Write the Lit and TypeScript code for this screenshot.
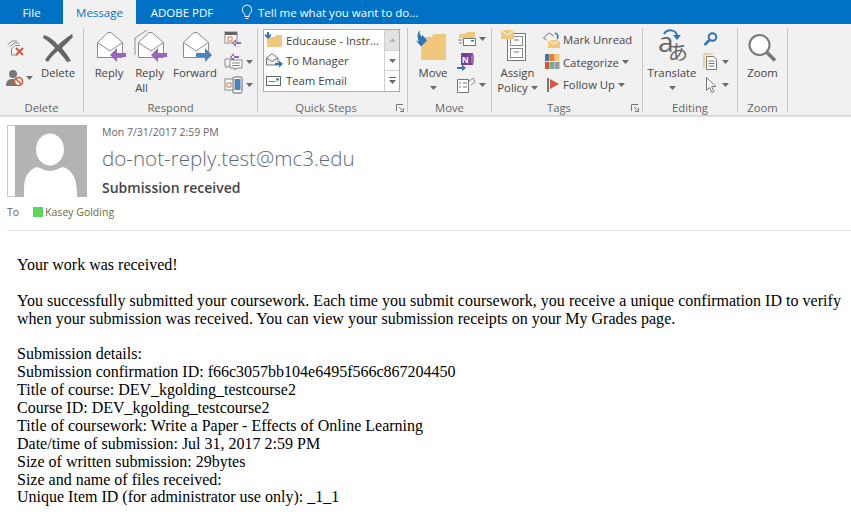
import { LitElement, html, css, svg } from "lit";
import { customElement } from "lit/decorators.js";

const caret = html`<svg class="caret" width="7" height="4" viewBox="0 0 7 4"><path d="M0 0h7L3.5 4z" fill="#6a6a6a"/></svg>`;

const env = (arrow: string, dir: "l" | "r", extra = "") => html`<svg width="34" height="34" viewBox="0 0 34 34">
  ${extra ? svg`<path d="${extra}" fill="none" stroke="#8f8f8f" stroke-width="1"/>` : ""}
  <path d="M5.500 14.500L16 4.500h3L30.500 14.500V29.500H5.500z" fill="#fff" stroke="#8a8a8a"/>
  <path d="M5.500 14.500L18 23L30.500 14.500" fill="none" stroke="#8a8a8a"/>
  ${dir === "l"
    ? svg`<path d="M34 25H25v-5l-7 7 7 7v-5h9z" fill="${arrow}"/>`
    : svg`<path d="M18 25h9v-5l7 7-7 7v-5h-9z" fill="${arrow}"/>`}
</svg>`;

const launcher = html`<svg class="launch" width="8" height="8" viewBox="0 0 8 8"><path d="M.5 7V.5H7M3 3l3.500 3.500M7.500 4v3.500H4" fill="none" stroke="#777"/></svg>`;

@customElement("app-root")
export class AppRoot extends LitElement {
  static styles = css`
    :host { display: block; width: 851px; height: 520px; overflow: hidden; background: #fff; font-family: "Open Sans", "Noto Sans", sans-serif; color: #444; }
    .tabs { display: flex; height: 24px; background: #0072c6; color: #fff; font-size: 11.5px; align-items: center; }
    .tab { height: 24px; display: flex; align-items: center; justify-content: center; }
    .file { width: 63px; }
    .active { width: 73px; background: #f1f1f1; color: #0072c6; }
    .pdf { width: 92px; }
    .tell { display: flex; align-items: center; gap: 5px; margin-left: 13px; }
    .ribbon { display: flex; height: 92px; box-sizing: border-box; background: #f1f1f1; border-bottom: 1px solid #d6d6d6; padding-top: 4px; font-size: 11.3px; color: #444; }
    .group { display: flex; flex-direction: column; height: 84px; border-right: 1px solid #c6c6c6; position: relative; }
    .content { display: flex; height: 72px; }
    .label { height: 12px; line-height: 16px; text-align: center; color: #666; font-size: 11.3px; }
    .launch { position: absolute; right: 3px; bottom: 0; }
    .big { display: flex; flex-direction: column; align-items: center; line-height: 15px; }
    .ic { height: 34px; display: flex; align-items: flex-end; justify-content: center; margin-bottom: 3px; }
    .ic svg { overflow: visible; }
    .under { height: 15px; display: flex; align-items: center; }
    .col { display: flex; flex-direction: column; }
    .del { width: 38px; padding: 6px 0 0 6px; box-sizing: border-box; gap: 6px; }
    .del .sm { height: 25px; gap: 2px; }
    .sm { height: 22.700px; display: flex; align-items: center; gap: 3px; white-space: nowrap; }
    .caret { flex: none; }
    .qs { display: flex; width: 137px; height: 63px; margin-left: 5px; margin-top: 1px; box-sizing: border-box; border: 1px solid #ababab; background: #fff; }
    .qlist { flex: 1; }
    .qrow { height: 20.300px; display: flex; align-items: center; gap: 3px; padding-left: 1px; white-space: nowrap; }
    .qbar { width: 14px; border-left: 1px solid #d0d0d0; display: flex; flex-direction: column; }
    .qbar div { flex: 1; display: flex; align-items: center; justify-content: center; }
    .qbar .up { background: #e2e2e2; }
    .qbar .mid { border-top: 1px solid #d0d0d0; border-bottom: 1px solid #d0d0d0; }
    .head { height: 115px; box-sizing: border-box; border-top: 1px solid #e0e0e0; padding: 8px 0 0 7px; display: flex; flex-direction: column; }
    .meta { display: flex; }
    .avatar { width: 80px; height: 72px; box-sizing: border-box; border: 1px solid #c8c8c8; border-right: none; display: flex; }
    .avatar i { width: 7px; background: #fff; }
    .avatar svg { margin-top: -1px; margin-bottom: -1px; }
    .texts { margin-left: 15px; display: flex; flex-direction: column; }
    .date { font-size: 10.5px; line-height: 14px; color: #666; }
    .from { font-size: 20.600px; font-weight: 300; line-height: 27px; margin-top: 6px; color: #5f6b75; }
    .subj { font-size: 14px; font-weight: 600; line-height: 18px; margin-top: 7px; color: #444; }
    .to { display: flex; align-items: center; font-size: 10.500px; height: 14px; margin-top: 8px; color: #666; }
    .to b { width: 10px; height: 10px; background: #5ed45a; margin-left: 14px; margin-right: 2px; }
    .to span { color: #6a6a3a; }
    .sep { height: 1px; flex: none; background: #e1e1e1; margin-top: 11px; }
    .body { padding: 25px 0 0 17px; font-family: "Liberation Serif", serif; font-size: 16px; line-height: 17.880px; color: #000; }
    .body p { margin: 0 0 17.880px; }
    .body .wide { letter-spacing: 0.025px; }
  `;

  render() {
    return html`
      <div class="tabs">
        <div class="tab file">File</div>
        <div class="tab active">Message</div>
        <div class="tab pdf">ADOBE PDF</div>
        <div class="tell">
          <svg width="12" height="17" viewBox="0 0 12 17"><path d="M6 1a4.800 4.800 0 0 0-3 8.500c.8.700 1 1.500 1 3h4c0-1.500.2-2.300 1-3A4.800 4.800 0 0 0 6 1zM4.500 14.500h3" fill="none" stroke="#fff"/></svg>
          <span>Tell me what you want to do...</span>
        </div>
      </div>
      <div class="ribbon">
        <div class="group" style="width:83px">
          <div class="content">
            <div class="col del">
              <div class="sm"><svg width="18" height="18" viewBox="0 0 18 18"><path d="M1.500 7L6 3h5M3.500 9L8 5h5M5.500 11L9 7.500h5" fill="none" stroke="#888"/><path d="M5.500 11v6h6" fill="none" stroke="#888"/><path d="M10 10l7 7M17 10l-7 7" stroke="#d9583b" stroke-width="2"/></svg></div>
              <div class="sm"><svg width="18" height="18" viewBox="0 0 18 18"><circle cx="7" cy="5" r="4" fill="#777"/><path d="M0 17c0-6 3-7 7-7s5 2 5 7z" fill="#777"/><circle cx="12.500" cy="12.500" r="4" fill="#fff" stroke="#d9583b" stroke-width="1.600"/><path d="M9.500 9.500l6 6" stroke="#d9583b" stroke-width="1.600"/></svg>${caret}</div>
            </div>
            <div class="big" style="width:40px">
              <div class="ic"><svg width="30" height="28" viewBox="0 0 30 28"><path d="M1 1C7 3 12 7 15 11C19 7 24 3 29 0L30 3C26 7 22 11 19 14C22 18 26 23 28 27L24 28C21 24 18 20 15 17C11 20 7 24 5 28L2 26C5 21 9 17 12 14C8 10 4 6 0 4z" fill="#666"/></svg></div>
              <span>Delete</span>
            </div>
          </div>
          <div class="label">Delete</div>
        </div>
        <div class="group" style="width:173px">
          <div class="content" style="padding-left:7px">
            <div class="big" style="width:36px"><div class="ic">${env("#9a64b8", "l")}</div><span>Reply</span></div>
            <div class="big" style="width:45px"><div class="ic">${env("#9a64b8", "l", "M2 27V10L14 2")}</div><span>Reply<br>All</span></div>
            <div class="big" style="width:46px"><div class="ic">${env("#4a82bd", "r")}</div><span>Forward</span></div>
            <div class="col" style="padding:0 0 0 6px">
              <div class="sm"><svg width="18" height="16" viewBox="0 0 18 16"><rect x="1" y="1" width="12" height="11" fill="#fff" stroke="#888"/><path d="M1 1h12v3H1z" fill="#666"/><rect x="4" y="6" width="4" height="4" fill="none" stroke="#e0782e"/><path d="M10 11h7v2h-7zM12 8l-4 4 4 4z" fill="#9a64b8"/></svg></div>
              <div class="sm"><svg width="19" height="18" viewBox="0 0 19 18"><path d="M1 6h7v7H4l-2 2v-2H1z" fill="#fff" stroke="#888"/><path d="M6 7h12v8h-5l-2 2v-2H6z" fill="#fff" stroke="#888"/><path d="M8 10h8M8 12.500h8" stroke="#888"/><path d="M8 3h7v2H8zM10 0L6 4l4 4z" fill="#9a64b8"/></svg>${caret}</div>
              <div class="sm"><svg width="19" height="18" viewBox="0 0 19 18"><rect x="1" y="3" width="11" height="11" fill="#fff" stroke="#888"/><rect x="3" y="7" width="4" height="4" fill="none" stroke="#e0782e"/><rect x="9" y="1" width="9" height="16" rx="1" fill="#fff" stroke="#666"/><rect x="10.500" y="3" width="6" height="11" fill="#4a82bd"/></svg>${caret}</div>
            </div>
          </div>
          <div class="label">Respond</div>
        </div>
        <div class="group" style="width:149px">
          <div class="content">
            <div class="qs">
              <div class="qlist">
                <div class="qrow"><svg width="18" height="16" viewBox="0 0 18 16"><path d="M2 5h7l2-2h6v12H2z" fill="#f0c87c"/><path d="M2 0h2v3l2-1v2l-3 3-3-3V2l2 1z" fill="#2f74b5"/></svg><span>Educause - Instr...</span></div>
                <div class="qrow"><svg width="18" height="16" viewBox="0 0 18 16"><path d="M1.500 6L7 1.500 13 6v7H1.500z" fill="#f1f1f1" stroke="#777"/><path d="M1.500 6L7 9.500 13 6" fill="none" stroke="#777"/><path d="M10 11h5v2h-5zM14 8.500l4 3.500-4 3.500z" fill="#2f74b5"/></svg><span>To Manager</span></div>
                <div class="qrow"><svg width="18" height="16" viewBox="0 0 18 16"><rect x="1.500" y="3.500" width="14" height="9" fill="#fff" stroke="#666"/><path d="M3.500 8.500h7" stroke="#777"/><rect x="11" y="5.500" width="3" height="2" fill="#2f74b5"/></svg><span>Team Email</span></div>
              </div>
              <div class="qbar">
                <div class="up"><svg width="7" height="4" viewBox="0 0 7 4"><path d="M0 4h7L3.500 0z" fill="#b5b5b5"/></svg></div>
                <div class="mid">${caret}</div>
                <div><svg width="7" height="8" viewBox="0 0 7 8"><path d="M0 .5h7" stroke="#6a6a6a"/><path d="M0 3h7L3.500 7z" fill="#6a6a6a"/></svg></div>
              </div>
            </div>
          </div>
          <div class="label" style="padding-right:13px">Quick Steps</div>
          ${launcher}
        </div>
        <div class="group" style="width:83px">
          <div class="content" style="padding-left:7px">
            <div class="big" style="width:36px"><div class="ic"><svg width="32" height="32" viewBox="0 0 32 32"><path d="M4 7h10l3-3h12v26H4z" fill="#f0c87c"/><path d="M3 0c-1 3 0 5 2 7V4.500l5 6-6 6-5-6 3 1C0 8 0 3 3 0z" fill="#2f74b5"/></svg></div><span>Move</span><div class="under">${caret}</div></div>
            <div class="col" style="padding:0 0 0 6px">
              <div class="sm"><svg width="19" height="17" viewBox="0 0 19 17"><path d="M2 3h6l2-2h8v6H2z" fill="#f0c87c"/><rect x="6.500" y="7.500" width="12" height="7" fill="#fff" stroke="#777"/><path d="M1 9h4M2 12h3" stroke="#777"/><rect x="14" y="9" width="3" height="1.500" fill="#2f74b5"/></svg>${caret}</div>
              <div class="sm"><svg width="19" height="18" viewBox="0 0 19 18"><rect x="4" y="0" width="12" height="12" fill="#7c3f96"/><path d="M14 2h3v8h-3z" fill="#a56cc0"/><text x="5" y="10" font-size="9" font-weight="700" fill="#fff" font-family="Liberation Sans">N</text><path d="M0 14h5v2H0zM5 11.500L9 15l-4 3z" fill="#2f74b5"/></svg></div>
              <div class="sm"><svg width="19" height="18" viewBox="0 0 19 18"><path d="M.5 3.500h11v13H.5z" fill="#fff" stroke="#777"/><path d="M2 7h2M6 7h4M2 11h2M6 11h4" stroke="#777"/><path d="M12 5l4-3 2 4-4 3" fill="none" stroke="#888"/></svg>${caret}</div>
            </div>
          </div>
          <div class="label">Move</div>
        </div>
        <div class="group" style="width:150px">
          <div class="content">
            <div class="big" style="width:51px"><div class="ic"><svg width="28" height="32" viewBox="0 0 28 32" style="margin-left:-6px"><rect x="6.500" y="3.500" width="18" height="27" fill="#fff" stroke="#777"/><rect x="9.500" y="6.500" width="12" height="9" fill="none" stroke="#888"/><rect x="9.500" y="18.500" width="12" height="9" fill="none" stroke="#888"/><path d="M13 10h5M13 22h5" stroke="#777"/><path d="M0 0h13v9H0z" fill="#f0c87c"/><path d="M0 0l6.500 5L13 0" fill="none" stroke="#fff"/></svg></div><span>Assign</span><span style="display:flex;align-items:center;gap:3px">Policy ${caret}</span></div>
            <div class="col">
              <div class="sm"><svg width="17" height="17" viewBox="0 0 17 17"><path d="M5 9h12v8H5z" fill="#f0c87c"/><path d="M5 9l6 4 6-4" fill="none" stroke="#fff"/><path d="M.5 7L6 2l5 3" fill="none" stroke="#777"/><path d="M.5 7l3 2" stroke="#777"/><path d="M12 2c3 1 3.500 4 2 6" fill="none" stroke="#2f74b5" stroke-width="1.500"/></svg><span>Mark Unread</span></div>
              <div class="sm"><svg width="17" height="16" viewBox="0 0 17 16"><rect x="2" y="0" width="4.500" height="7" fill="#3f74b5"/><rect x="7" y="0" width="4.500" height="7" fill="#ec7a1f"/><rect x="12" y="0" width="4.500" height="7" fill="#f0c87c"/><rect x="2" y="8" width="4.500" height="7" fill="#d9503a"/><rect x="7" y="8" width="4.500" height="7" fill="#6fae8e"/><rect x="12" y="8" width="4.500" height="7" fill="#999"/></svg><span>Categorize</span>${caret}</div>
              <div class="sm"><svg width="17" height="16" viewBox="0 0 17 16"><rect x="4" y="1" width="2" height="14" fill="#777"/><path d="M7 2l9 5-9 5z" fill="#d9583b"/></svg><span>Follow Up</span>${caret}</div>
            </div>
          </div>
          <div class="label" style="padding-right:16px">Tags</div>
          ${launcher}
        </div>
        <div class="group" style="width:94px">
          <div class="content">
            <div class="big" style="width:58px"><div class="ic"><svg width="34" height="34" viewBox="0 0 34 34"><path d="M9 6c3-5 11-5 13 1" fill="none" stroke="#2f74b5" stroke-width="2"/><path d="M18 7h8l-4 5z" fill="#2f74b5"/><text x="3" y="24" font-size="28" fill="#666" font-family="Open Sans">a</text><text x="13" y="32" font-size="20" fill="#666" font-family="Noto Sans CJK JP">あ</text></svg></div><span>Translate</span><div class="under">${caret}</div></div>
            <div class="col" style="padding:0 0 0 2px">
              <div class="sm"><svg width="15" height="14" viewBox="0 0 15 14"><circle cx="9.500" cy="5" r="3.800" fill="none" stroke="#2f74b5" stroke-width="2"/><path d="M6.500 8l-5 5" stroke="#2f74b5" stroke-width="2.500"/></svg></div>
              <div class="sm"><svg width="16" height="18" viewBox="0 0 16 18"><path d="M1 15V1h9" fill="none" stroke="#e0b060"/><path d="M3.500 3.500h7l3 3v10h-10z" fill="#fff" stroke="#777"/><path d="M5.500 8h6M5.500 10.500h6M5.500 13h6" stroke="#777"/></svg>${caret}</div>
              <div class="sm"><svg width="16" height="18" viewBox="0 0 16 18"><path d="M3.500 1.500v13l3-3 2.500 5 2-1-2.500-5h4.500z" fill="#fff" stroke="#777"/></svg>${caret}</div>
            </div>
          </div>
          <div class="label">Editing</div>
        </div>
        <div class="group" style="width:49px">
          <div class="content">
            <div class="big" style="width:49px"><div class="ic"><svg width="30" height="28" viewBox="0 0 30 28"><circle cx="11.500" cy="11" r="10" fill="#fff" stroke="#777" stroke-width="2"/><path d="M19 18.500L27 26.500" stroke="#777" stroke-width="3.500"/></svg></div><span>Zoom</span></div>
          </div>
          <div class="label">Zoom</div>
        </div>
      </div>
      <div class="head">
        <div class="meta">
          <div class="avatar"><i></i><svg width="72" height="72" viewBox="0 0 72 72"><rect width="72" height="72" fill="#b3b3b3"/><ellipse cx="35" cy="24.500" rx="14" ry="16" fill="#fff"/><path d="M9 72C9 62 9 56 11 52C13 47 18 43 22 42C26 43 30 46 35 46C40 46 44 43 48 42C52 43 57 47 59 52C61 56 62 62 62 72z" fill="#fff"/></svg></div>
          <div class="texts">
            <div class="date">Mon 7/31/2017 2:59 PM</div>
            <div class="from">do-not-reply.test@mc3.edu</div>
            <div class="subj">Submission received</div>
          </div>
        </div>
        <div class="to">To<b></b><span>Kasey Golding</span></div>
        <div class="sep"></div>
      </div>
      <div class="body">
        <p>Your work was received!</p>
        <p class="wide">You successfully submitted your coursework. Each time you submit coursework, you receive a unique confirmation ID to verify when your submission was received. You can view your submission receipts on your My Grades page.</p>
        <div>Submission details:</div>
        <div>Submission confirmation ID: f66c3057bb104e6495f566c867204450</div>
        <div>Title of course: DEV_kgolding_testcourse2</div>
        <div>Course ID: DEV_kgolding_testcourse2</div>
        <div>Title of coursework: Write a Paper - Effects of Online Learning</div>
        <div>Date/time of submission: Jul 31, 2017 2:59 PM</div>
        <div>Size of written submission: 29bytes</div>
        <div>Size and name of files received:</div>
        <div>Unique Item ID (for administrator use only): _1_1</div>
      </div>
    `;
  }
}
